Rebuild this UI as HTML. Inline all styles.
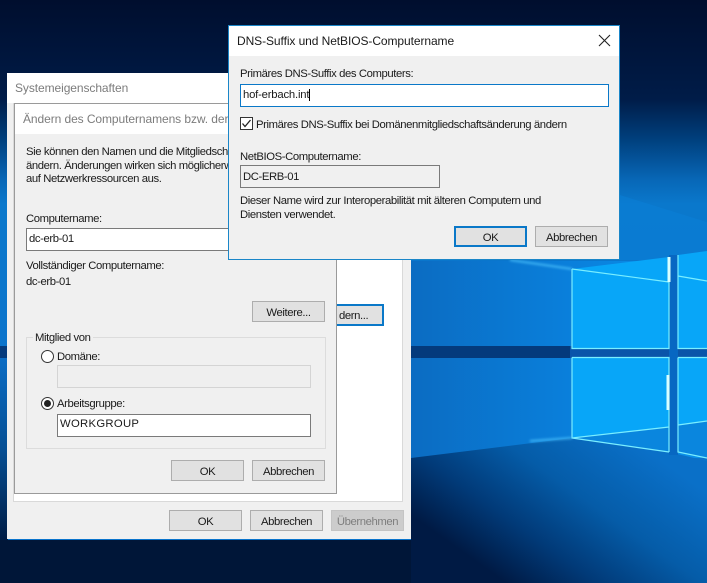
<!DOCTYPE html>
<html><head><meta charset="utf-8"><style>
html,body{margin:0;padding:0}
body{width:707px;height:583px;overflow:hidden;position:relative;background:#012;font:11.3px/14px "Liberation Sans",sans-serif;letter-spacing:-.4px;color:#1a1a1a}
div{position:absolute;box-sizing:border-box}
.t{white-space:nowrap}
.h{font-size:12px;letter-spacing:-.08px}
.b{height:21px;width:73px;background:#e1e1e1;border:1px solid #adadad;text-align:center;line-height:20px;padding-top:1px;white-space:nowrap}
.i{height:23px;background:#fff;border:1px solid #7a7a7a;padding:3px 0 0 2px;line-height:14px;white-space:nowrap}
svg{position:absolute;left:0;top:0}
</style></head><body>
<svg width="707" height="583" viewBox="0 0 707 583">
<defs>
<linearGradient id="a" x1="0" y1="0" x2="0" y2="1">
<stop offset="0" stop-color="#000e2e"/><stop offset=".17" stop-color="#001c48"/><stop offset=".24" stop-color="#00407e"/><stop offset=".31" stop-color="#0868b8"/><stop offset=".35" stop-color="#0a78cc"/><stop offset=".6" stop-color="#0a74cc"/><stop offset="1" stop-color="#0a74cc"/>
</linearGradient>
<linearGradient id="c" x1="0" y1="0" x2="1" y2="0"><stop offset="0" stop-color="#0b6cc2"/><stop offset=".55" stop-color="#0a80dc"/><stop offset="1" stop-color="#0a92ea"/></linearGradient>
<linearGradient id="f" gradientUnits="userSpaceOnUse" x1="640" y1="445" x2="530" y2="600"><stop offset="0" stop-color="#0a70c8"/><stop offset=".4" stop-color="#055ca8"/><stop offset=".72" stop-color="#013a78"/><stop offset="1" stop-color="#001a44"/></linearGradient>
<linearGradient id="l" x1="0" y1="0" x2="0" y2="1"><stop offset="0" stop-color="#0a6cc4"/><stop offset=".5" stop-color="#064f94"/><stop offset="1" stop-color="#001c44"/></linearGradient>
<filter id="bl"><feGaussianBlur stdDeviation="1.2"/></filter>
</defs>
<rect width="707" height="583" fill="url(#a)"/>
<polygon points="620,195 707,222 707,260 620,260" fill="#0a80d8" opacity=".5"/>
<rect x="411" y="261" width="296" height="85" fill="url(#c)"/>
<rect x="411" y="358" width="296" height="100" fill="url(#c)"/>
<polygon points="411,458 572,438 669,452 707,461 707,583 411,583" fill="url(#f)"/>
<rect x="0" y="358" width="8" height="182" fill="url(#l)"/>
<rect x="0" y="540" width="411" height="43" fill="#001638"/>
<rect x="0" y="346" width="707" height="12" fill="#0a55aa"/>
<rect x="0" y="346" width="570" height="12" fill="#043a7c"/>
<rect x="669" y="255" width="9" height="200" fill="#0767c2"/>
<polygon points="572,269 669,257 669,349 572,349" fill="#08a6f8"/>
<polygon points="572,357 669,357 669,427 572,438" fill="#08a6f8"/>
<polygon points="572,438 669,427 669,452" fill="#0a86de"/>
<polygon points="678,255 707,251 707,349 678,349" fill="#08a6f8"/>
<polygon points="678,357 707,357 707,421 678,425" fill="#08a6f8"/>
<polygon points="678,425 707,421 707,458 678,452" fill="#0a86de"/>
<g stroke="#7aeeff" fill="none" stroke-width="1.2">
<path d="M572 269V348.500H669V257M572 269L669 282"/>
<path d="M572 357.500H669V452M572 357.500V438L669 427M572 438L669 452"/>
<path d="M678 255V348.500H707M678 276L707 281"/>
<path d="M678 357.500H707M678 357.500V452L707 458M678 425L707 421"/>
</g>
<path d="M510 260L572 269M530 441L572 438" stroke="#50c8ff" stroke-width="1.500" filter="url(#bl)"/>
<path d="M669 257V282M668 375V410" stroke="#d8ffff" stroke-width="3"/>
</svg>

<!-- back window -->
<div style="left:7px;top:73px;width:404px;height:466px;background:#f0f0f0"></div>
<div style="left:7px;top:73px;width:404px;height:30px;background:#fff"></div>
<div class="t h" style="left:15px;top:81px;color:#7c7c7c">Systemeigenschaften</div>
<div style="left:13px;top:103px;width:390px;height:399px;background:#fff;border:1px solid #d9d9d9"></div>
<div style="left:300px;top:304px;width:84px;height:22px;background:#e1e1e1;border:2px solid #0a78c8;line-height:20px;padding-left:37px;white-space:nowrap">dern...</div>
<div class="b" style="left:169px;top:510px">OK</div>
<div class="b" style="left:250px;top:510px">Abbrechen</div>
<div class="b" style="left:331px;top:510px;background:#ccc;border-color:#c4c4c4;color:#7e7e7e">Übernehmen</div>

<!-- middle window -->
<div style="left:14px;top:103px;width:323px;height:391px;background:#f0f0f0;border:1px solid #9a9a9a"></div>
<div style="left:15px;top:104px;width:321px;height:30px;background:#fff"></div>
<div class="t h" style="left:23px;top:112px;color:#7c7c7c">Ändern des Computernamens bzw. der Domäne</div>
<div class="t" style="left:26px;top:146px;line-height:13.500px;width:300px">Sie können den Namen und die Mitgliedschaft dieses Computers<br>ändern. Änderungen wirken sich möglicherweise auf den Zugriff<br>auf Netzwerkressourcen aus.</div>
<div class="t" style="left:26px;top:212px">Computername:</div>
<div class="i" style="left:26px;top:228px;width:285px">dc-erb-01</div>
<div class="t" style="left:26px;top:259px">Vollständiger Computername:</div>
<div class="t" style="left:26px;top:275px">dc-erb-01</div>
<div class="b" style="left:252px;top:301px">Weitere...</div>
<div style="left:26px;top:337px;width:300px;height:112px;border:1px solid #dcdcdc"></div>
<div class="t" style="left:33px;top:331px;background:#f0f0f0;padding:0 3px 0 2px">Mitglied von</div>
<div style="left:41px;top:350px;width:13px;height:13px;border-radius:50%;background:#fff;border:1px solid #333"></div>
<div class="t" style="left:57px;top:350px">Domäne:</div>
<div style="left:57px;top:365px;width:254px;height:23px;background:#efefef;border:1px solid #d4d4d4"></div>
<div style="left:41px;top:397px;width:13px;height:13px;border-radius:50%;background:#fff;border:1px solid #333"></div>
<div style="left:44px;top:400px;width:7px;height:7px;border-radius:50%;background:#222"></div>
<div class="t" style="left:57px;top:397px">Arbeitsgruppe:</div>
<div class="i" style="left:57px;top:414px;width:254px;letter-spacing:.3px;padding-top:2px">WORKGROUP</div>
<div class="b" style="left:171px;top:460px">OK</div>
<div class="b" style="left:252px;top:460px">Abbrechen</div>

<!-- front window -->
<div style="left:228px;top:25px;width:392px;height:235px;background:#f0f0f0;border:1px solid #1a86c8"></div>
<div style="left:229px;top:26px;width:390px;height:30px;background:#fff"></div>
<div class="t h" style="left:237px;top:34px">DNS-Suffix und NetBIOS-Computername</div>
<svg style="left:598px;top:34px" width="13" height="13" viewBox="0 0 13 13"><path d="M1 1L12 12M12 1L1 12" stroke="#222" stroke-width="1.100" fill="none"/></svg>
<div class="t" style="left:240px;top:67px">Primäres DNS-Suffix des Computers:</div>
<div class="i" style="left:240px;top:84px;width:369px;border-color:#0a78c8;letter-spacing:-.2px">hof-erbach.int<span style="border-left:1px solid #000"></span></div>
<div style="left:240px;top:117px;width:13px;height:13px;background:#fff;border:1px solid #333"></div>
<svg style="left:240px;top:117px" width="13" height="13" viewBox="0 0 13 13"><path d="M2.500 6.500L5 9.500L10.500 3" stroke="#222" stroke-width="1.300" fill="none"/></svg>
<div class="t" style="left:256px;top:118px">Primäres DNS-Suffix bei Domänenmitgliedschaftsänderung ändern</div>
<div class="t" style="left:240px;top:150px">NetBIOS-Computername:</div>
<div class="i" style="left:240px;top:165px;width:200px;background:#f0f0f0;padding-top:4px">DC-ERB-01</div>
<div class="t" style="left:240px;top:195px;line-height:13.500px">Dieser Name wird zur Interoperabilität mit älteren Computern und<br>Diensten verwendet.</div>
<div class="b" style="left:454px;top:226px;border:2px solid #0a78c8;line-height:18px">OK</div>
<div class="b" style="left:535px;top:226px">Abbrechen</div>
</body></html>
